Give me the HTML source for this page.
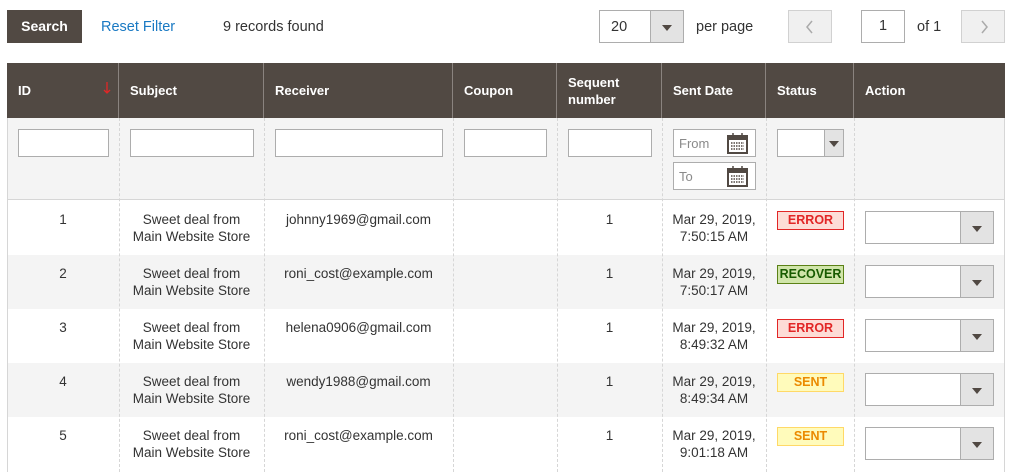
<!DOCTYPE html>
<html><head><style>
*{box-sizing:border-box;margin:0;padding:0}
body{width:1015px;height:472px;overflow:hidden;background:#fff;font-family:"Liberation Sans",sans-serif;font-size:13.5px;color:#333;position:relative}
.a{position:absolute}
.inp{position:absolute;background:#fff;border:1px solid #adadad;height:28px}
.sel{position:absolute;background:#fff;border:1px solid #adadad}
.sel .ar{position:absolute;right:0;top:0;bottom:0;width:33px;background:#e3e3e3;border-left:1px solid #adadad}
.sel .ar:after{content:"";position:absolute;left:50%;top:50%;margin:-2px 0 0 -5px;border-left:5px solid transparent;border-right:5px solid transparent;border-top:6px solid #514943}
.hd{position:absolute;top:63px;height:55px;background:#514943;color:#fff;font-weight:bold;font-size:13px;display:flex;align-items:center;padding-left:11px;border-right:1px solid #8a837f}
.vl{position:absolute;width:0;border-left:1px dashed #d6d6d6}
.c{position:absolute;text-align:center;line-height:17px}
.badge{position:absolute;left:777px;width:67px;height:19px;font-weight:bold;font-size:12.5px;text-align:center;line-height:17px;border:1px solid}
.err{background:#fddcd6;border-color:#e22626;color:#e22626}
.rec{background:#d0e5a9;border-color:#5b8116;color:#185b00}
.sent{background:#fffbbb;border-color:#ffd967;color:#eb8a00}
.cal{position:absolute;right:7px;top:2px}
.tt{top:19px;font-size:14.5px}
</style></head><body>
<div class="a" style="left:7px;top:10px;width:75px;height:33px;background:#514943;color:#fff;font-weight:bold;font-size:14px;text-align:center;line-height:33px">Search</div>
<div class="a tt" style="left:101px;color:#1979c3">Reset Filter</div>
<div class="a tt" style="left:223px">9 records found</div>
<div class="sel" style="left:599px;top:10px;width:85px;height:33px"><span class="a" style="left:11px;top:8px;font-size:14.5px">20</span><div class="ar"></div></div>
<div class="a tt" style="left:696px">per page</div>
<div class="a" style="left:788px;top:10px;width:44px;height:33px;background:#f0f0f0;border:1px solid #d1d1d1"><svg class="a" style="left:14px;top:8px" width="14" height="16"><path d="M9 2 L4 8 L9 14" fill="none" stroke="#aaa" stroke-width="1.5"/></svg></div>
<div class="inp" style="left:861px;top:10px;width:44px;height:33px;text-align:center;line-height:31px;font-size:14.5px">1</div>
<div class="a tt" style="left:917px">of 1</div>
<div class="a" style="left:961px;top:10px;width:44px;height:33px;background:#f0f0f0;border:1px solid #d1d1d1"><svg class="a" style="left:15px;top:8px" width="14" height="16"><path d="M5 2 L10 8 L5 14" fill="none" stroke="#aaa" stroke-width="1.5"/></svg></div>

<div class="a" style="left:7px;top:63px;width:998px;height:409px;border-left:1px solid #d6d6d6;border-right:1px solid #d6d6d6"></div>
<div class="a" style="left:8px;top:118px;width:996px;height:82px;background:#f4f4f4;border-bottom:1px solid #d6d6d6"></div>
<div class="a" style="left:8px;top:255px;width:996px;height:54px;background:#f4f4f4"></div>
<div class="a" style="left:8px;top:363px;width:996px;height:54px;background:#f4f4f4"></div>

<div class="hd" style="left:7px;width:112px">ID<svg class="a" style="left:96px;top:18px" width="8" height="14"><path d="M4 1 V12 M1 9 L4 12 L7 9" fill="none" stroke="#e22626" stroke-width="1.3"/></svg></div>
<div class="hd" style="left:119px;width:145px">Subject</div>
<div class="hd" style="left:264px;width:189px">Receiver</div>
<div class="hd" style="left:453px;width:104px">Coupon</div>
<div class="hd" style="left:557px;width:105px;line-height:17px">Sequent<br>number</div>
<div class="hd" style="left:662px;width:104px">Sent Date</div>
<div class="hd" style="left:766px;width:88px">Status</div>
<div class="hd" style="left:854px;width:151px;border-right:none">Action</div>

<div class="vl" style="left:119px;top:118px;height:354px"></div>
<div class="vl" style="left:264px;top:118px;height:354px"></div>
<div class="vl" style="left:453px;top:118px;height:354px"></div>
<div class="vl" style="left:557px;top:118px;height:354px"></div>
<div class="vl" style="left:662px;top:118px;height:354px"></div>
<div class="vl" style="left:766px;top:118px;height:354px"></div>
<div class="vl" style="left:854px;top:118px;height:354px"></div>

<div class="inp" style="left:18px;top:129px;width:91px"></div>
<div class="inp" style="left:130px;top:129px;width:124px"></div>
<div class="inp" style="left:275px;top:129px;width:168px"></div>
<div class="inp" style="left:464px;top:129px;width:83px"></div>
<div class="inp" style="left:568px;top:129px;width:84px"></div>
<div class="inp" style="left:673px;top:129px;width:83px"><span class="a" style="left:5px;top:6px;color:#8a8a8a;font-size:13px">From</span><svg class="cal" width="21" height="22"><rect x="1" y="4" width="19" height="17" fill="#fff" stroke="#514943" stroke-width="2"/><rect x="1" y="4" width="19" height="4" fill="#514943"/><path d="M6 1V6M15 1V6" stroke="#514943" stroke-width="1.5"/><path d="M4 11h13M4 14h13M4 17h13" stroke="#514943" stroke-width="1.5" stroke-dasharray="1.5 1"/></svg></div>
<div class="inp" style="left:673px;top:162px;width:83px"><span class="a" style="left:5px;top:6px;color:#8a8a8a;font-size:13px">To</span><svg class="cal" width="21" height="22"><rect x="1" y="4" width="19" height="17" fill="#fff" stroke="#514943" stroke-width="2"/><rect x="1" y="4" width="19" height="4" fill="#514943"/><path d="M6 1V6M15 1V6" stroke="#514943" stroke-width="1.5"/><path d="M4 11h13M4 14h13M4 17h13" stroke="#514943" stroke-width="1.5" stroke-dasharray="1.5 1"/></svg></div>
<div class="sel" style="left:777px;top:129px;width:67px;height:28px"><div class="ar" style="width:19px"></div></div>

<div class="c" style="left:7px;width:112px;top:211px">1</div>
<div class="c" style="left:119px;width:145px;top:211px">Sweet deal from<br>Main Website Store</div>
<div class="c" style="left:264px;width:189px;top:211px">johnny1969@gmail.com</div>
<div class="c" style="left:557px;width:105px;top:211px">1</div>
<div class="c" style="left:662px;width:104px;top:211px">Mar 29, 2019,<br>7:50:15 AM</div>
<div class="badge err" style="top:211px">ERROR</div>
<div class="sel" style="left:865px;top:211px;width:129px;height:33px"><div class="ar"></div></div>

<div class="c" style="left:7px;width:112px;top:265px">2</div>
<div class="c" style="left:119px;width:145px;top:265px">Sweet deal from<br>Main Website Store</div>
<div class="c" style="left:264px;width:189px;top:265px">roni_cost@example.com</div>
<div class="c" style="left:557px;width:105px;top:265px">1</div>
<div class="c" style="left:662px;width:104px;top:265px">Mar 29, 2019,<br>7:50:17 AM</div>
<div class="badge rec" style="top:265px">RECOVER</div>
<div class="sel" style="left:865px;top:265px;width:129px;height:33px"><div class="ar"></div></div>

<div class="c" style="left:7px;width:112px;top:319px">3</div>
<div class="c" style="left:119px;width:145px;top:319px">Sweet deal from<br>Main Website Store</div>
<div class="c" style="left:264px;width:189px;top:319px">helena0906@gmail.com</div>
<div class="c" style="left:557px;width:105px;top:319px">1</div>
<div class="c" style="left:662px;width:104px;top:319px">Mar 29, 2019,<br>8:49:32 AM</div>
<div class="badge err" style="top:319px">ERROR</div>
<div class="sel" style="left:865px;top:319px;width:129px;height:33px"><div class="ar"></div></div>

<div class="c" style="left:7px;width:112px;top:373px">4</div>
<div class="c" style="left:119px;width:145px;top:373px">Sweet deal from<br>Main Website Store</div>
<div class="c" style="left:264px;width:189px;top:373px">wendy1988@gmail.com</div>
<div class="c" style="left:557px;width:105px;top:373px">1</div>
<div class="c" style="left:662px;width:104px;top:373px">Mar 29, 2019,<br>8:49:34 AM</div>
<div class="badge sent" style="top:373px">SENT</div>
<div class="sel" style="left:865px;top:373px;width:129px;height:33px"><div class="ar"></div></div>

<div class="c" style="left:7px;width:112px;top:427px">5</div>
<div class="c" style="left:119px;width:145px;top:427px">Sweet deal from<br>Main Website Store</div>
<div class="c" style="left:264px;width:189px;top:427px">roni_cost@example.com</div>
<div class="c" style="left:557px;width:105px;top:427px">1</div>
<div class="c" style="left:662px;width:104px;top:427px">Mar 29, 2019,<br>9:01:18 AM</div>
<div class="badge sent" style="top:427px">SENT</div>
<div class="sel" style="left:865px;top:427px;width:129px;height:33px"><div class="ar"></div></div>
</body></html>
